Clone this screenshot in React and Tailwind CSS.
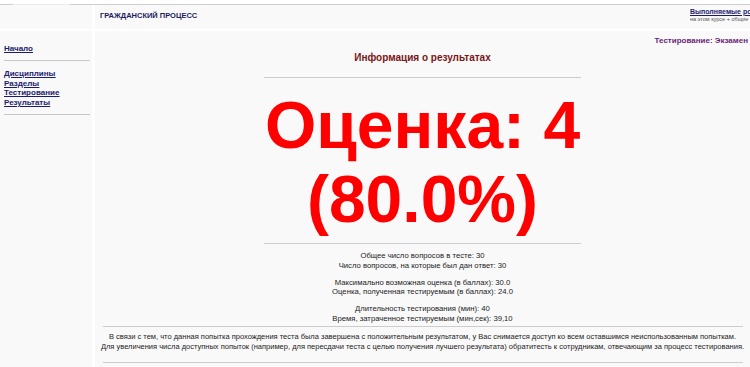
export default function App() {
  const f = { fontFamily: '"Liberation Sans", Arial, sans-serif' };
  return (
    <div className="w-[750px] h-[367px] overflow-hidden bg-white" style={f}>
      <div className="h-[4px]" />
      <div className="flex h-[1px]">
        <div className="w-[13px] bg-[#cfcfcf]" />
        <div className="w-[57px] bg-[#ececec]" />
        <div className="flex-1 bg-[#cfcfcf]" />
      </div>
      <div className="grid grid-cols-[92px_1fr] gap-x-[3px] gap-y-[2px] grid-rows-[24px_1fr] h-[362px]">
        <div className="bg-[#f9f9f9]" />
        <div className="bg-[#f9f9f9] flex items-center justify-between overflow-hidden">
          <div className="pl-[5px] text-[7.5px] font-bold text-[#1c1c5e] mt-[-2px]">ГРАЖДАНСКИЙ ПРОЦЕСС</div>
          <div className="w-[60px] overflow-hidden whitespace-nowrap mt-[-4px]">
            <div className="text-[7px] leading-[8px] font-bold text-[#1c1c6e] underline">Выполняемые роли</div>
            <div className="text-[5.5px] leading-[7px] text-[#555]">на этом курсе + общие</div>
          </div>
        </div>
        <div className="bg-[#f9f9f9] px-[4px] pt-[13px]">
          <a className="block text-[8px] leading-[10px] font-bold text-[#1c1c6e] underline">Начало</a>
          <div className="h-[1px] bg-[#c8c8c8] mt-[6px] w-[86px]" />
          <div className="mt-[8px] text-[8px] leading-[9.6px] font-bold text-[#1c1c6e] underline">
            <a className="block">Дисциплины</a>
            <a className="block">Разделы</a>
            <a className="block">Тестирование</a>
            <a className="block">Результаты</a>
          </div>
          <div className="h-[1px] bg-[#c8c8c8] mt-[7px] w-[86px]" />
        </div>
        <div className="bg-[#f9f9f9] overflow-hidden">
          <div className="mt-[5px] text-right pr-[2px] text-[8px] leading-[10px] font-bold text-[#6b1f78]">Тестирование: Экзамен</div>
          <div className="mt-[6px] text-center text-[10px] leading-[12px] font-bold text-[#7a1616]">Информация о результатах</div>
          <div className="mx-auto mt-[13px] w-[317px] h-[1px] bg-[#cdcdcd]" />
          <div className="mt-[10px] text-center text-[66px] leading-[74px] font-bold text-[#ff0000]">
            <div>Оценка: 4</div>
            <div>(80.0%)</div>
          </div>
          <div className="mx-auto mt-[7px] w-[317px] h-[1px] bg-[#cdcdcd]" />
          <div className="mt-[7px] text-center text-[7.7px] leading-[9.5px] text-[#222]">
            <div>Общее число вопросов в тесте: 30</div>
            <div>Число вопросов, на которые был дан ответ: 30</div>
            <div className="mt-[7.5px]">Максимально возможная оценка (в баллах): 30.0</div>
            <div>Оценка, полученная тестируемым (в баллах): 24.0</div>
            <div className="mt-[7.5px]">Длительность тестирования (мин): 40</div>
            <div>Время, затраченное тестируемым (мин,сек): 39,10</div>
          </div>
          <div className="ml-[8px] mr-[7px] mt-[3px] h-[1px] bg-[#cdcdcd]" />
          <div className="mt-[5px] text-center text-[7.5px] leading-[10px] text-[#222] whitespace-nowrap">
            <div>В связи с тем, что данная попытка прохождения теста была завершена с положительным результатом, у Вас снимается доступ ко всем оставшимся неиспользованным попыткам.</div>
            <div>Для увеличения числа доступных попыток (например, для пересдачи теста с целью получения лучшего результата) обратитесть к сотрудникам, отвечающим за процесс тестирования.</div>
          </div>
          <div className="ml-[8px] mr-[7px] mt-[10px] h-[1px] bg-[#cdcdcd]" />
        </div>
      </div>
    </div>
  );
}
